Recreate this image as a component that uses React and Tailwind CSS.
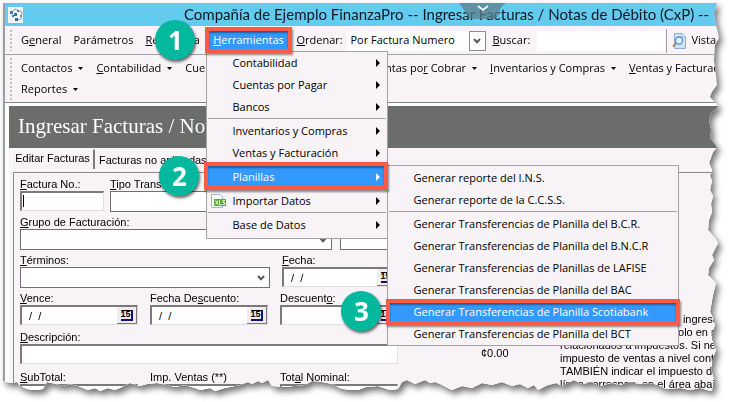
import React, { useState } from 'react';
import clsx from 'clsx';

// [distance from the right edge, y]
const RIGHT_EDGE = [
  [14, 3], [17, 13], [16, 20], [13, 33], [12, 38], [16, 45], [17, 60], [15, 75], [14, 85],
  [19, 92], [21, 97], [15, 103], [13, 107], [20, 113], [22, 120], [20, 130], [21, 138],
  [14, 147], [18, 152], [22, 163], [19, 170], [21, 176], [19, 181], [21, 190], [18, 196],
  [20, 204], [19, 212], [22, 220], [23, 230], [16, 238], [13, 243], [19, 255], [17, 260],
  [22, 268], [23, 275], [15, 283], [18, 295], [21, 312], [18, 318], [16, 325], [19, 333],
  [19, 340], [15, 350], [18, 358], [20, 368], [17, 380], [19, 391],
];

// [x on a 731 wide sheet, y]
const BOTTOM_EDGE = [
  [711, 391], [700, 388], [690, 390], [680, 388], [666, 389], [658, 385], [650, 383],
  [640, 384], [630, 382], [620, 385], [612, 383], [600, 386], [592, 382], [582, 384],
  [574, 380], [562, 386], [556, 383], [548, 385], [538, 390], [534, 385], [528, 388],
  [520, 384], [512, 386], [502, 382], [492, 385], [482, 383], [472, 388], [462, 386],
  [452, 390], [440, 384], [435, 382], [430, 383], [425, 380], [415, 384], [407, 380],
  [402, 382], [398, 389], [390, 390], [378, 386], [366, 387], [358, 390], [348, 390],
  [340, 388], [332, 384], [322, 382], [312, 381], [305, 385], [283, 387], [272, 386],
  [268, 380], [262, 383], [258, 381], [252, 384], [248, 382], [240, 385], [225, 388],
  [215, 391], [210, 388], [200, 390], [195, 388], [185, 385], [175, 387], [167, 385],
  [157, 383], [147, 384], [140, 386], [130, 383], [122, 387], [115, 390], [108, 388],
  [100, 391], [95, 388], [88, 390], [78, 386], [70, 384], [62, 386], [56, 384], [47, 382],
  [43, 389], [35, 390], [27, 389], [20, 386], [17, 382], [10, 383], [3, 381],
];

const tornShape = `polygon(3px 3px, ${RIGHT_EDGE.map(([x, y]) => `calc(100% - ${x}px) ${y}px`).join(', ')}, ${BOTTOM_EDGE.map(
  ([x, y]) => `${(x / 731) * 100}% ${y}px`
).join(', ')})`;

const Badge = ({ children, className }) => (
  <span
    className={clsx(
      'absolute z-40 flex h-10 w-10 items-center justify-center rounded-full bg-[#04b89e] font-["Open_Sans",sans-serif] text-[26px] font-bold text-white shadow-[1px_2px_3px_rgba(0,0,0,0.6)]',
      className
    )}
  >
    {children}
  </span>
);

const Highlight = ({ className }) => (
  <span
    className={clsx(
      'pointer-events-none absolute z-30 border-4 border-[#ff5a46] shadow-[1px_2px_2px_rgba(0,0,0,0.45),inset_0_2px_2px_rgba(0,0,0,0.4)]',
      className
    )}
  />
);

const Chevron = ({ className }) => (
  <svg viewBox="0 0 8 6" className={clsx('pointer-events-none absolute h-[6px] w-2', className)}>
    <path d="M1 1 L4 4.2 L7 1" fill="none" stroke="#555a58" strokeWidth="2" />
  </svg>
);

const Grip = () => (
  <span className="w-[2px] shrink-0 self-stretch bg-[repeating-linear-gradient(to_bottom,#bdb9bd_0,#bdb9bd_2px,transparent_2px,transparent_4px)]" />
);

const ToolButton = ({ children }) => (
  <button className="flex h-[21px] shrink-0 items-center gap-[6px] whitespace-nowrap">
    <span>{children}</span>
    <svg viewBox="0 0 5 3" className="h-[3px] w-[5px]">
      <path d="M0 0 H5 L2.5 3 Z" fill="#000" />
    </svg>
  </button>
);

const MenuItem = ({ children, icon, arrow, active }) => (
  <button
    className={clsx(
      'flex h-[22px] w-full items-center whitespace-nowrap pl-[25px] pr-[7px] text-left',
      active ? 'bg-[#3399ff] text-white' : 'text-black'
    )}
  >
    {icon}
    <span className="flex-1">{children}</span>
    {arrow && (
      <svg viewBox="0 0 4 8" className="h-2 w-1">
        <path d="M0 0 L4 4 L0 8 Z" fill="currentColor" />
      </svg>
    )}
  </button>
);

const Separator = () => <div className="mx-px h-[2px] border-t border-[#a5a2a5]" />;

const XlsIcon = () => (
  <svg viewBox="0 0 15 15" className="-ml-[21px] mr-[6px] h-[15px] w-[15px]">
    <path d="M0.5 0.5 H9 L11.500 3 V13.500 H0.500 Z" fill="#fff" stroke="#9db4dc" />
    <rect x="3" y="5" width="12" height="7" fill="#5ba83c" />
    <path
      d="M4.500 6.500 L7 10.500 M7 6.500 L4.500 10.500 M8.500 6.500 V10.500 H10.500 M13.800 6.500 H12 V8.500 H13.500 V10.500 H11.500"
      fill="none"
      stroke="#fff"
      strokeWidth="0.9"
    />
  </svg>
);

const AppIcon = () => (
  <svg viewBox="0 0 16 16" className="h-4 w-4 shrink-0">
    <rect width="15" height="16" fill="#f1f3f5" />
    <path d="M4 5 L7 2 L14 5 L13 12 L9 13" fill="none" stroke="#9aa0a6" />
    <rect x="2" y="4" width="3" height="3" fill="#3a78b8" />
    <rect x="6" y="6" width="3" height="3" fill="#2f6dad" />
    <rect x="4" y="8" width="2" height="2" fill="#3a78b8" />
    <rect x="7" y="11" width="3" height="3" fill="#2f6dad" />
    <rect x="9" y="3" width="2" height="2" fill="#777" />
    <rect x="12" y="8" width="2" height="2" fill="#888" />
  </svg>
);

// magnifier lens low on the page, handle towards the bottom left
const PreviewIcon = () => (
  <svg viewBox="0 0 14 16" className="h-4 w-[14px]">
    <path d="M2.500 0.500 H10 L13.500 4 V15.500 H2.500 Z" fill="#cfe3fb" stroke="#88aee0" />
    <path d="M10 0.500 V4 H13.500" fill="#fff" stroke="#88aee0" />
    <path d="M4.500 10 L1 13.500" stroke="#b5824c" strokeWidth="2" />
    <circle cx="7" cy="7.500" r="3.500" fill="#e6f3ff" stroke="#5b8fd0" strokeWidth="1.300" />
  </svg>
);

const Field = ({ id, label, className, children }) => (
  <div className={className}>
    <label htmlFor={id} className="block h-[14px] whitespace-nowrap leading-[14px]">
      {label}
    </label>
    <div className="relative">{children}</div>
  </div>
);

const SelectField = ({ id, label, className }) => (
  <Field id={id} label={label} className={className}>
    <select id={id} className="block h-[21px] w-full appearance-none border border-[#6f706f] bg-white" />
    <Chevron className="right-[5px] top-2" />
  </Field>
);

const DateField = ({ id, label, value }) => (
  <Field id={id} label={label}>
    <input
      id={id}
      defaultValue={value}
      className="block h-5 w-full border-2 border-b border-r border-[#7b797b] border-b-[#e2dfe2] border-r-[#e2dfe2] bg-white px-1"
    />
    <button className="absolute right-px top-[2px] flex h-[17px] w-5 items-center justify-center border-b border-r border-[#7b797b] bg-[#f0ecf0]">
      <span className="flex h-[11px] w-3 items-center justify-center border-b-2 border-r-2 border-t border-b-[#10107b] border-r-[#10107b] border-t-black text-[9px] font-bold">
        15
      </span>
    </button>
  </Field>
);

const TextField = ({ id, label, className, caret }) => (
  <Field id={id} label={label} className={className}>
    <input
      id={id}
      className="block h-5 w-full border-2 border-b border-r border-[#7b797b] border-b-[#e2dfe2] border-r-[#e2dfe2] bg-white px-1"
    />
    {caret && <span className="pointer-events-none absolute left-[3px] top-1 h-3 w-px bg-black" />}
  </Field>
);

const TitleBar = () => (
  <header className="relative flex h-[23px] items-center bg-[#63cbef] pl-[3px]">
    <AppIcon />
    <h1 className="ml-[160px] whitespace-nowrap font-['Lato',sans-serif] text-[15px] text-[#101820]">
      Compañía de Ejemplo FinanzaPro -- Ingresar Facturas / Notas de Débito (CxP) --
    </h1>
    <svg viewBox="0 0 48 20" className="absolute left-[454px] top-0 h-5 w-12">
      <path d="M0 0 H47 Q41 3 39 13 Q38 16 34 16 H14 Q9 16 7 10 Z" fill="#5d7f8c" opacity="0.75" />
      <path d="M19 3 L24 7 L29 3" fill="none" stroke="#e8f7fd" strokeWidth="2" />
    </svg>
  </header>
);

const ToolsMenu = () => (
  <div className="absolute left-0 top-full z-20 w-[182px] border border-[#a5a2a5] bg-[#f7f3f7] pb-[2px] text-black">
    <MenuItem arrow>Contabilidad</MenuItem>
    <MenuItem arrow>Cuentas por Pagar</MenuItem>
    <MenuItem arrow>Bancos</MenuItem>
    <Separator />
    <MenuItem arrow>Inventarios y Compras</MenuItem>
    <MenuItem arrow>Ventas y Facturación</MenuItem>
    <Separator />
    <div className="relative">
      <MenuItem arrow active>Planillas</MenuItem>
      <Highlight className="-left-[3px] -right-px -top-[4px] -bottom-[2px]" />
      <Badge className="-left-12 -top-[10px]">2</Badge>
      <PayrollMenu />
    </div>
    <Separator />
    <MenuItem arrow icon={<XlsIcon />}>Importar Datos</MenuItem>
    <Separator />
    <MenuItem arrow>Base de Datos</MenuItem>
  </div>
);

const PayrollMenu = () => (
  <div className="absolute -top-px left-full z-20 w-[292px] border border-[#a5a2a5] bg-[#f7f3f7] pt-px">
    <MenuItem>Generar reporte del I.N.S.</MenuItem>
    <MenuItem>Generar reporte de la C.C.S.S.</MenuItem>
    <Separator />
    <MenuItem>Generar Transferencias de Planilla del B.C.R.</MenuItem>
    <MenuItem>Generar Transferencias de Planilla del B.N.C.R</MenuItem>
    <MenuItem>Generar Transferencias de Planillas de LAFISE</MenuItem>
    <MenuItem>Generar Transferencias de Planilla del BAC</MenuItem>
    <div className="relative">
      <MenuItem active>Generar Transferencias de Planilla Scotiabank</MenuItem>
      <Highlight className="-inset-x-[2px] -top-[2px] -bottom-[2px]" />
      <Badge className="-left-[47px] -top-[10px]">3</Badge>
    </div>
    <MenuItem>Generar Transferencias de Planilla del BCT</MenuItem>
  </div>
);

const MenuBar = ({ search, setSearch }) => (
  <nav className="flex h-[29px] items-center whitespace-nowrap border-b border-[#a5a2a5] pb-[3px] pl-[5px] pt-1 *:shrink-0">
    <Grip />
    <button className="ml-[9px]">G<u>e</u>neral</button>
    <button className="ml-3">Parámetros</button>
    <button className="ml-3 w-[55px] text-left"><u>R</u>eferencia</button>
    <div className="relative ml-[6px] h-[21px] w-[84px]">
      <button className="h-full w-full bg-[#3399ff] text-white"><u>H</u>erramientas</button>
      <Highlight className="-left-px -right-[2px] -top-[3px] -bottom-[2px]" />
      <Badge className="-left-[51px] -top-[10px]">1</Badge>
      <ToolsMenu />
    </div>
    <label htmlFor="ordenar" className="ml-[6px] w-[51px]"><u>O</u>rdenar:</label>
    <div className="relative">
      <select id="ordenar" className="block h-5 w-[139px] appearance-none bg-white pl-[3px]">
        <option>Por Factura Numero</option>
      </select>
      <span className="pointer-events-none absolute right-0 top-0 h-5 w-[17px] border border-[#8c8c8c]">
        <Chevron className="left-[3px] top-[6px]" />
      </span>
    </div>
    <label htmlFor="buscar" className="ml-[6px] w-[45px]"><u>B</u>uscar:</label>
    <input
      id="buscar"
      value={search}
      onChange={(e) => setSearch(e.target.value)}
      className="h-5 w-32 bg-white px-1"
    />
    <button className="ml-px flex h-6 items-center gap-[5px] border-l border-[#a5a2a5] pl-[5px]">
      <PreviewIcon />
      Vista
    </button>
  </nav>
);

const ToolBar = () => (
  <nav className="flex h-[47px] pb-px pl-[5px] pt-[3px]">
    <Grip />
    <div className="ml-[9px]">
      <div className="flex gap-[13px]">
        <ToolButton>Contactos</ToolButton>
        <ToolButton><u>C</u>ontabilidad</ToolButton>
        <ToolButton>Cuentas por <u>P</u>agar</ToolButton>
        <ToolButton><u>B</u>ancos</ToolButton>
        <ToolButton>Cuentas po<u>r</u> Cobrar</ToolButton>
        <ToolButton><u>I</u>nventarios y Compras</ToolButton>
        <ToolButton><u>V</u>entas y Facturación</ToolButton>
      </div>
      <ToolButton>Reportes</ToolButton>
    </div>
  </nav>
);

const InvoiceForm = () => (
  <form className="flex w-[378px] shrink-0 flex-col gap-[3px]">
    <div className="flex gap-[6px]">
      <TextField id="factura" label={<><u>F</u>actura No.:</>} className="w-[84px]" caret />
      <SelectField id="tipo" label={<><u>T</u>ipo Transacción:</>} className="w-[132px]" />
    </div>
    <div className="flex items-end gap-2">
      <SelectField id="grupo" label={<><u>G</u>rupo de Facturación:</>} className="w-[312px]" />
      <input aria-label="Grupo" className="h-[21px] min-w-0 flex-1 border border-[#6f706f] bg-white" />
    </div>
    <div className="flex gap-3">
      <SelectField id="terminos" label={<><u>T</u>érminos:</>} className="w-[250px]" />
      <div className="flex-1">
        <DateField id="fecha" label={<><u>F</u>echa:</>} value=" /  /" />
      </div>
    </div>
    <div className="grid grid-cols-3 gap-3">
      <DateField id="vence" label={<><u>V</u>ence:</>} value=" /  /" />
      <DateField id="fechadesc" label={<>Fecha De<u>s</u>cuento:</>} value=" /  /" />
      <DateField id="descuento" label={<>Descuent<u>o</u>:</>} value="" />
    </div>
    <TextField id="descripcion" label={<><u>D</u>escripción:</>} className="pt-[2px]" />
    <div className="grid grid-cols-3 gap-3 pt-[3px]">
      <TextField id="subtotal" label={<><u>S</u>ubTotal:</>} />
      <TextField id="impventas" label="Imp. Ventas (**)" />
      <TextField id="total" label={<>Tot<u>a</u>l Nominal:</>} />
    </div>
  </form>
);

const App = () => {
  const [search, setSearch] = useState('');

  return (
    <div className="min-h-screen overflow-hidden bg-white">
      <div className="drop-shadow-[3px_4px_3px_rgba(0,0,0,0.55)]">
        <main
          className="overflow-hidden bg-[#f7f3f7] pt-[3px] font-['Open_Sans',sans-serif] text-[11px] text-black"
          style={{ clipPath: tornShape }}
        >
          <div className="ml-[3px] border-l-2 border-[#9a9ea8]">
            <TitleBar />
            <MenuBar search={search} setSearch={setSearch} />
            <ToolBar />
            <section className="border-t border-[#84868c] bg-white pl-1 pt-[3px] font-['Liberation_Sans',sans-serif] text-[11px]">
              <h2 className="flex h-[42px] items-center whitespace-nowrap bg-[#6a6d69] pl-[9px] font-['Liberation_Serif',serif] text-[21px] text-white">
                Ingresar Facturas / Notas de Débito (CxP)
              </h2>
              <div className="bg-[#f7f3f7]">
                <div className="flex h-[22px] items-end border-b border-white pl-[2px]">
                  <button className="h-5 w-[84px] whitespace-nowrap border-l border-r-2 border-t border-white border-r-[#7b797b] pb-1">
                    Editar Facturas
                  </button>
                  <button className="h-[19px] whitespace-nowrap border-r border-t border-white border-r-[#7b797b] px-1">
                    Facturas no aplicadas
                  </button>
                </div>
                <div className="mt-[2px] pl-1">
                  <div className="flex border-l border-t border-[#8c8a8c] pl-[6px] pt-1">
                    <InvoiceForm />
                    <output className="ml-[83px] mt-[168px] w-[79px] shrink-0">¢0.00</output>
                    <p className="mt-[136px] whitespace-nowrap leading-[13px]">
                      (**) Impuestos según los ingresos
                      <br />
                      Debe incluir cada dato solo en rubros
                      <br />
                      relacionados a impuestos. Si necesita
                      <br />
                      impuesto de ventas a nivel contable
                      <br />
                      TAMBIÉN indicar el impuesto de la
                      <br />
                      línea correspon. en el área abajo.
                    </p>
                  </div>
                </div>
              </div>
            </section>
          </div>
        </main>
      </div>
    </div>
  );
};

export default App;
